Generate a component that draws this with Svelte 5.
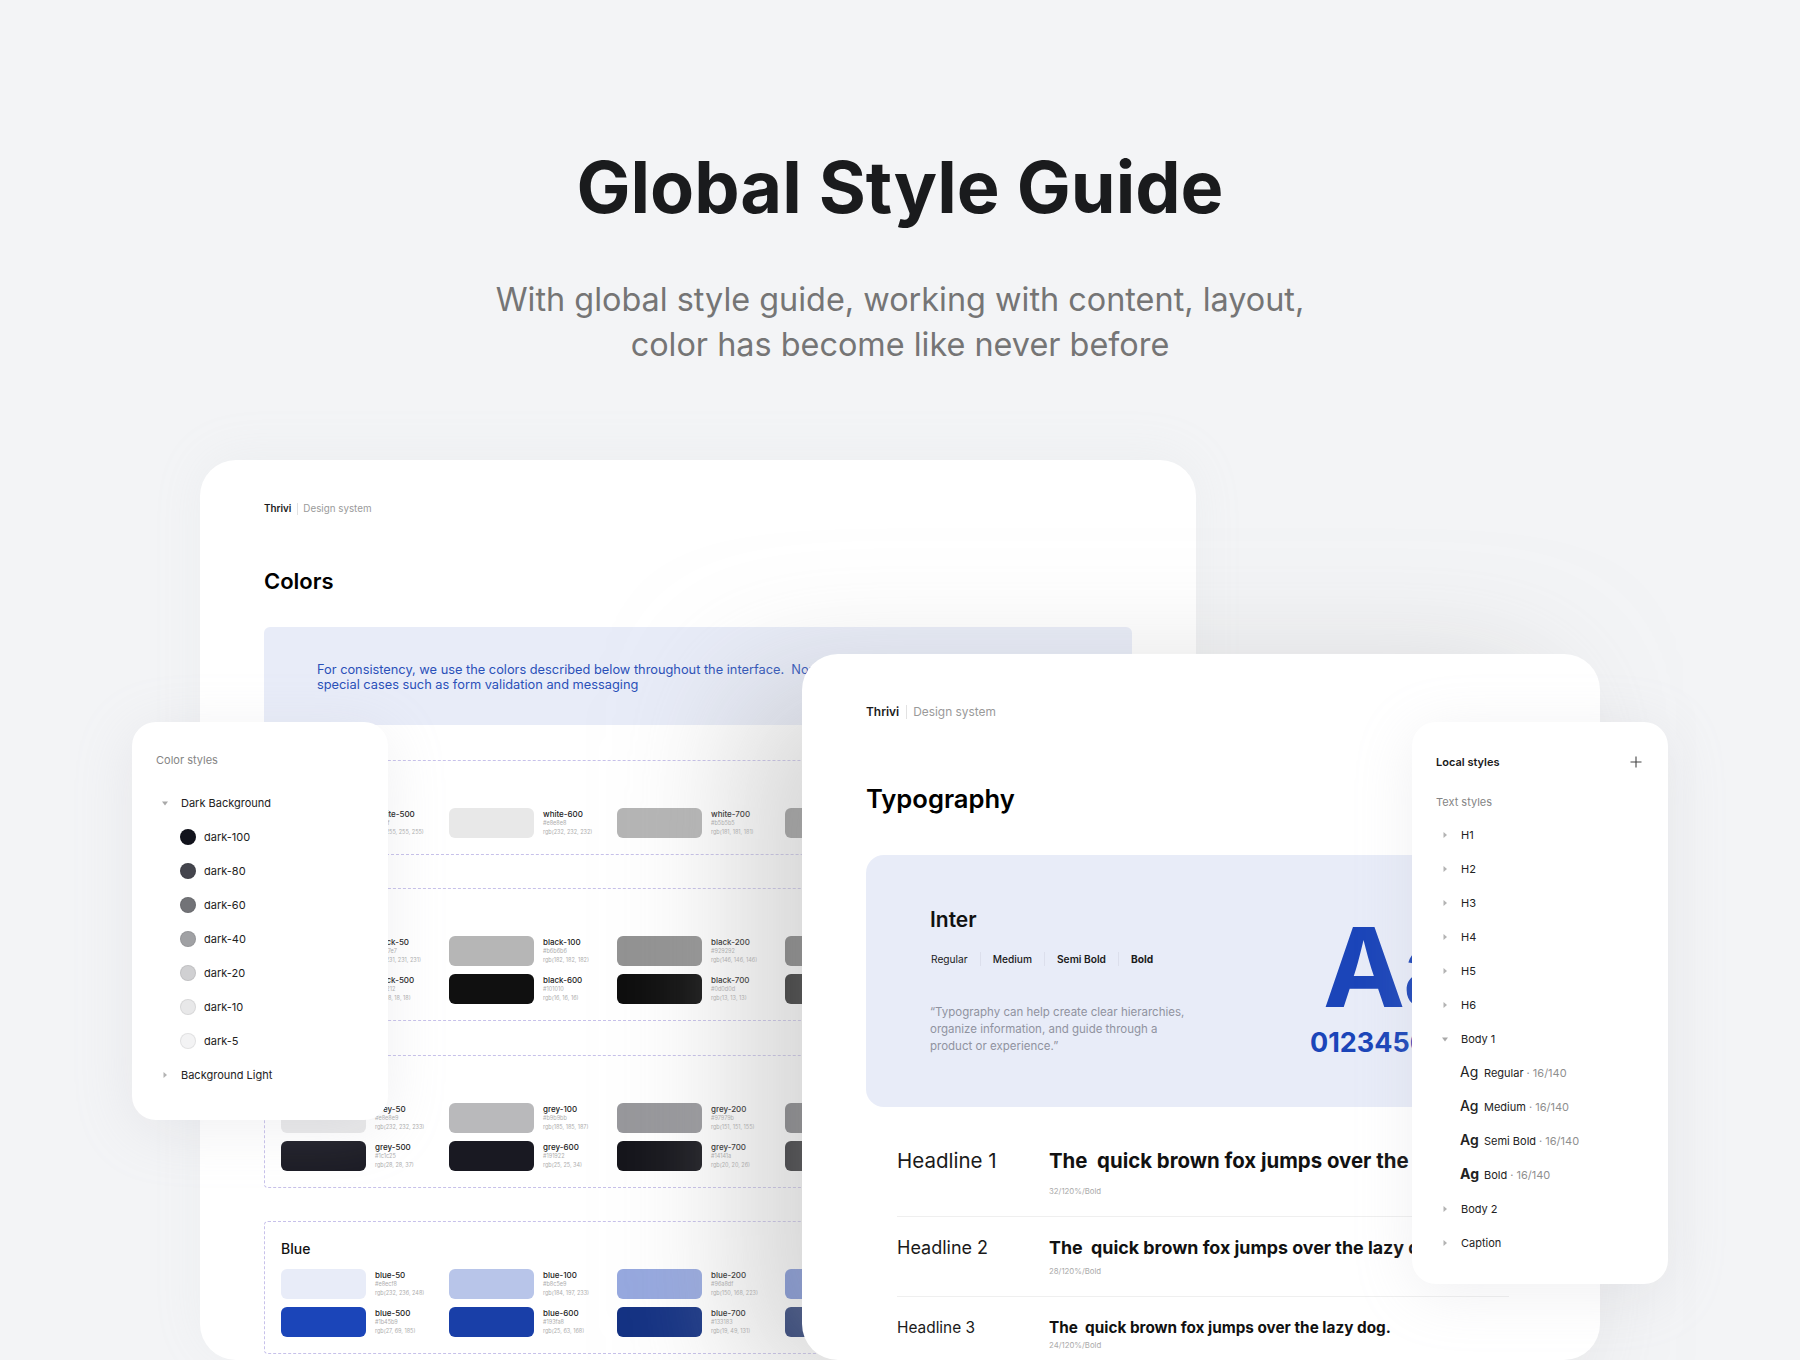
<script>
  const palette = [
    {
      name: 'White',
      rows: [[
        ['white-500', '#ffffff', 'rgb(255, 255, 255)', '#ffffff'],
        ['white-600', '#e8e8e8', 'rgb(232, 232, 232)', '#e8e8e8'],
        ['white-700', '#b5b5b5', 'rgb(181, 181, 181)', '#b5b5b5'],
        ['white-800', '#919191', 'rgb(145, 145, 145)', '#919191']
      ]]
    },
    {
      name: 'Black',
      rows: [[
        ['black-50', '#e7e7e7', 'rgb(231, 231, 231)', '#e7e7e7'],
        ['black-100', '#b6b6b6', 'rgb(182, 182, 182)', '#b6b6b6'],
        ['black-200', '#929292', 'rgb(146, 146, 146)', '#929292'],
        ['black-300', '#6d6d6d', 'rgb(109, 109, 109)', '#6d6d6d']
      ], [
        ['black-500', '#121212', 'rgb(18, 18, 18)', '#121212'],
        ['black-600', '#101010', 'rgb(16, 16, 16)', '#101010'],
        ['black-700', '#0d0d0d', 'rgb(13, 13, 13)', '#0d0d0d'],
        ['black-800', '#0a0a0a', 'rgb(10, 10, 10)', '#0a0a0a']
      ]]
    },
    {
      name: 'Grey',
      rows: [[
        ['grey-50', '#e8e8e9', 'rgb(232, 232, 233)', '#e8e8e9'],
        ['grey-100', '#b9b9bb', 'rgb(185, 185, 187)', '#b9b9bb'],
        ['grey-200', '#97979b', 'rgb(151, 151, 155)', '#97979b'],
        ['grey-300', '#6e6e72', 'rgb(110, 110, 114)', '#6e6e72']
      ], [
        ['grey-500', '#1c1c25', 'rgb(28, 28, 37)', '#1c1c25'],
        ['grey-600', '#191922', 'rgb(25, 25, 34)', '#191922'],
        ['grey-700', '#14141a', 'rgb(20, 20, 26)', '#14141a'],
        ['grey-800', '#101014', 'rgb(16, 16, 20)', '#101014']
      ]]
    },
    {
      name: 'Blue',
      rows: [[
        ['blue-50', '#e8ecf8', 'rgb(232, 236, 248)', '#e8ecf8'],
        ['blue-100', '#b8c5e9', 'rgb(184, 197, 233)', '#b8c5e9'],
        ['blue-200', '#96a8df', 'rgb(150, 168, 223)', '#96a8df'],
        ['blue-300', '#6c85d2', 'rgb(108, 133, 210)', '#6c85d2']
      ], [
        ['blue-500', '#1b45b9', 'rgb(27, 69, 185)', '#1b45b9'],
        ['blue-600', '#193fa8', 'rgb(25, 63, 168)', '#193fa8'],
        ['blue-700', '#133183', 'rgb(19, 49, 131)', '#133183'],
        ['blue-800', '#0f2666', 'rgb(15, 38, 102)', '#0f2666']
      ]]
    }
  ];

  const darks = [
    ['dark-100', '#12131c'],
    ['dark-80', '#44454d'],
    ['dark-60', '#727377'],
    ['dark-40', '#a0a1a4'],
    ['dark-20', '#d0d0d2'],
    ['dark-10', '#e8e8e9'],
    ['dark-5', '#f3f3f4']
  ];

  const ags = [
    ['Regular', 400],
    ['Medium', 500],
    ['Semi Bold', 600],
    ['Bold', 700]
  ];

  const headlines = [
    { label: 'Headline 1', meta: '32/120%/Bold', cls: 'h1', text: 'The  quick brown fox jumps over the lazy dog.' },
    { label: 'Headline 2', meta: '28/120%/Bold', cls: 'h2', text: 'The  quick brown fox jumps over the lazy dog.' },
    { label: 'Headline 3', meta: '24/120%/Bold', cls: 'h3', text: 'The  quick brown fox jumps over the lazy dog.' }
  ];
</script>

{#snippet caret(open)}
  <svg class="caret" width="8" height="8" viewBox="0 0 8 8">
    {#if open}
      <path d="M1 2.5h6L4 6.5z" fill="#a9a9a9" />
    {:else}
      <path d="M2.5 1v6L6 4z" fill="#b4b4b4" />
    {/if}
  </svg>
{/snippet}

<div class="page">
  <header class="hero">
    <h1>Global Style Guide</h1>
    <p>With global style guide, working with content, layout,<br />color has become like never before</p>
  </header>

  <section class="window back">
    <div class="crumb">
      <b>Thrivi</b><i></i><span>Design system</span>
    </div>
    <h2>Colors</h2>
    <div class="banner">
      <div>For consistency, we use the colors described below throughout the interface.  Non-standard colors appear only in</div>
      <div>special cases such as form validation and messaging</div>
    </div>
    <div class="groups">
      {#each palette as group}
        <div class="group">
          <h3>{group.name}</h3>
          {#each group.rows as row}
            <div class="swatches">
              {#each row as [name, hex, rgb, color]}
                <div class="swatch">
                  <div class="chip" style="background: {color}"></div>
                  <div class="info">
                    <strong>{name}</strong>
                    <small>{hex}</small>
                    <small>{rgb}</small>
                  </div>
                </div>
              {/each}
            </div>
          {/each}
        </div>
      {/each}
    </div>
  </section>

  <aside class="panel colors">
    <div class="muted">Color styles</div>
    <ul>
      <li>{@render caret(true)}<span>Dark Background</span></li>
      {#each darks as [name, color]}
        <li class="dot-row"><em style="background: {color}"></em><span>{name}</span></li>
      {/each}
      <li>{@render caret(false)}<span>Background Light</span></li>
    </ul>
  </aside>

  <section class="window front">
    <div class="crumb">
      <b>Thrivi</b><i></i><span>Design system</span>
    </div>
    <h2>Typography</h2>
    <div class="specimen">
      <div class="about">
        <h3>Inter</h3>
        <div class="weights">
          <span class="w400">Regular</span>
          <span class="w500">Medium</span>
          <span class="w600">Semi Bold</span>
          <span class="w700">Bold</span>
        </div>
        <p>“Typography can help create clear hierarchies, organize information, and guide through a product or experience.”</p>
      </div>
      <div class="glyphs">
        <div class="aa">Aa</div>
        <div class="digits">0123456789</div>
      </div>
    </div>
    <div class="samples">
      {#each headlines as line}
        <div class="sample {line.cls}">
          <div class="label">{line.label}</div>
          <div class="copy">
            <div class="text">{line.text}</div>
            <div class="meta">{line.meta}</div>
          </div>
        </div>
      {/each}
    </div>
  </section>

  <aside class="panel local">
    <div class="panel-head">
      <b>Local styles</b>
      <svg width="12" height="12" viewBox="0 0 12 12"><path d="M6 .5v11M.5 6h11" stroke="#444" stroke-width="1.1" fill="none" /></svg>
    </div>
    <div class="muted">Text styles</div>
    <ul>
      {#each ['H1', 'H2', 'H3', 'H4', 'H5', 'H6'] as name}
        <li>{@render caret(false)}<span>{name}</span></li>
      {/each}
      <li>{@render caret(true)}<span>Body 1</span></li>
      {#each ags as [name, weight]}
        <li class="ag-row">
          <em style="font-weight: {weight}">Ag</em>
          <span>{name}</span><u>· 16/140</u>
        </li>
      {/each}
      <li>{@render caret(false)}<span>Body 2</span></li>
      <li>{@render caret(false)}<span>Caption</span></li>
    </ul>
  </aside>
</div>

<style>
  :global(body) {
    margin: 0;
    background: #f3f4f6;
  }

  .page {
    position: relative;
    height: 1360px;
    overflow: hidden;
    font-family: Inter, "Liberation Sans", sans-serif;
    background: #f3f4f6;
    color: #111;
  }

  .hero {
    text-align: center;
    padding-top: 144px;
  }

  .hero h1 {
    margin: 0;
    font-size: 72px;
    line-height: 86px;
    font-weight: 700;
    color: #1a1b1d;
  }

  .hero p {
    margin: 47px 0 0;
    font-size: 32.4px;
    line-height: 45px;
    color: #757575;
  }

  .window {
    position: absolute;
    background: #fff;
    border-radius: 36px;
    overflow: hidden;
  }

  .back {
    left: 200px;
    top: 460px;
    width: 996px;
    height: 900px;
    padding: 42px 64px 0;
    box-sizing: border-box;
    box-shadow: 0 -6px 50px rgba(190, 192, 198, 0.1);
  }

  .front {
    left: 802px;
    top: 654px;
    width: 798px;
    height: 706px;
    padding: 50px 64px 0;
    box-sizing: border-box;
    overflow: hidden;
    box-shadow: -60px 30px 130px rgba(175, 175, 175, 0.52);
  }

  .crumb {
    display: flex;
    align-items: center;
    font-size: 9.8px;
    line-height: 14px;
    color: #9a9a9a;
  }

  .crumb b {
    font-weight: 600;
    color: #1a1a1a;
  }

  .crumb i {
    width: 1px;
    height: 12px;
    background: #e2e2e2;
    margin: 0 5.5px;
  }

  .back h2 {
    margin: 51px 0 32px;
    font-size: 22px;
    line-height: 28px;
    font-weight: 600;
    color: #000;
  }

  .banner {
    width: 868px;
    height: 98px;
    box-sizing: border-box;
    padding: 35px 53px 0;
    border-radius: 6px 6px 0 0;
    background: #e8ecf8;
    color: #2a50b8;
    font-size: 12.8px;
    line-height: 15px;
  }

  .banner div {
    white-space: pre;
  }

  .groups {
    margin-top: 35px;
    width: 868px;
    display: flex;
    flex-direction: column;
    gap: 33.3px;
  }

  .group {
    border: 1px dashed #c7c1ea;
    border-radius: 4px;
    padding: 0 16px 16px;
  }

  .group h3 {
    margin: 0;
    height: 47px;
    padding-top: 18px;
    box-sizing: border-box;
    font-size: 14px;
    line-height: 17px;
    font-weight: 500;
    color: #111;
  }

  .swatches {
    display: grid;
    grid-template-columns: repeat(4, 168px);
  }

  .swatches + .swatches {
    margin-top: 8px;
  }

  .swatch {
    display: flex;
    gap: 9px;
  }

  .chip {
    width: 85px;
    height: 30px;
    border-radius: 6px;
  }

  .info {
    display: flex;
    flex-direction: column;
  }

  .info strong {
    font-size: 8px;
    line-height: 10px;
    margin-top: 1px;
    font-weight: 500;
    color: #222;
  }

  .info small {
    font-size: 5.5px;
    line-height: 9px;
    color: #adadad;
  }

  .panel {
    position: absolute;
    box-sizing: border-box;
    width: 256px;
    background: #fff;
    border-radius: 24px;
    box-shadow: 0 10px 60px rgba(180, 182, 188, 0.2);
    font-size: 11px;
    line-height: 14px;
    color: #222;
  }

  .colors {
    left: 132px;
    top: 722px;
    height: 398px;
    padding: 31px 24px 0;
  }

  .local {
    left: 1412px;
    top: 722px;
    height: 562px;
    padding: 33px 24px 0;
  }

  .muted {
    font-size: 11px;
    color: #858585;
  }

  .panel ul {
    list-style: none;
    margin: 19px 0 0;
    padding: 0;
  }

  .local ul {
    margin-top: 9px;
  }

  .panel li {
    height: 34px;
    display: flex;
    align-items: center;
    white-space: nowrap;
  }

  .caret {
    margin-left: 5px;
    margin-right: 12px;
    flex: none;
  }

  .dot-row em {
    width: 16px;
    height: 16px;
    border-radius: 50%;
    margin: 0 8px 0 24px;
    box-sizing: border-box;
    border: 0.5px solid rgba(0, 0, 0, 0.07);
  }

  .panel-head {
    display: flex;
    align-items: center;
    justify-content: space-between;
    padding-right: 2px;
    margin-bottom: 26px;
  }

  .panel-head b {
    font-weight: 600;
    color: #1a1a1a;
  }

  .ag-row em {
    font-style: normal;
    font-size: 14px;
    width: 24px;
    margin-left: 24px;
    position: relative;
    top: -1px;
    flex: none;
  }

  .ag-row span {
    font-size: 11px;
    margin-right: 3px;
  }

  .ag-row u {
    font-size: 11px;
    text-decoration: none;
    color: #8f8f8f;
  }

  .front h2 {
    margin: 62px 0 39px;
    font-size: 25.6px;
    line-height: 34px;
    font-weight: 600;
    color: #000;
  }

  .front .crumb {
    font-size: 11.9px;
    line-height: 16px;
  }

  .front .crumb i {
    height: 14px;
    margin: 0 6.5px;
  }

  .specimen {
    width: 670px;
    height: 252px;
    box-sizing: border-box;
    padding: 52px 0 0 64px;
    border-radius: 18px;
    background: #e8ecf8;
    display: flex;
    overflow: hidden;
  }

  .about {
    width: 380px;
    flex: none;
  }

  .about h3 {
    margin: 0;
    font-size: 21px;
    line-height: 26px;
    font-weight: 600;
    color: #111;
  }

  .weights {
    display: flex;
    margin-top: 19px;
    font-size: 10.2px;
    line-height: 14px;
    color: #1a1a1a;
  }

  .weights span {
    padding: 0 12px;
    border-left: 1px solid #dcdfec;
  }

  .weights span:first-child {
    padding-left: 1px;
    border-left: 0;
  }

  .w400 { font-weight: 400; }
  .w500 { font-weight: 500; }
  .w600 { font-weight: 600; }
  .w700 { font-weight: 700; }

  .about p {
    margin: 38px 0 0;
    width: 262px;
    font-size: 11.5px;
    line-height: 17px;
    color: #9093a0;
  }

  .glyphs {
    color: #1b45b9;
    font-weight: 700;
    white-space: nowrap;
  }

  .aa {
    margin: 4px 0 0 13px;
    font-size: 110px;
    line-height: 112px;
    letter-spacing: -2px;
  }

  .digits {
    margin-top: 2px;
    font-size: 27px;
    line-height: 36px;
    font-weight: 700;
  }

  .samples {
    margin: 0 0 0 31px;
    width: 612px;
  }

  .sample {
    display: flex;
    border-bottom: 1px solid #efefef;
    white-space: nowrap;
  }

  .sample .label {
    width: 152px;
    flex: none;
    color: #1a1a1a;
  }

  .text {
    font-weight: 700;
    white-space: pre;
    color: #111;
  }

  .meta {
    font-size: 7.8px;
    line-height: 10px;
    color: #aaa;
  }

  .h1 {
    padding: 40px 0 20px;
  }

  .h1 .label {
    font-size: 20.5px;
    line-height: 28px;
  }

  .h1 .text {
    font-size: 20.4px;
    line-height: 28px;
  }

  .h1 .meta {
    margin-top: 11px;
  }

  .h2 {
    padding: 19px 0 20px;
  }

  .h2 .label {
    font-size: 18px;
    line-height: 24px;
  }

  .h2 .text {
    font-size: 17.85px;
    line-height: 24px;
  }

  .h2 .meta {
    margin-top: 6px;
  }

  .h3 {
    padding: 21px 0 21px;
    border-bottom: 0;
  }

  .h3 .label {
    font-size: 15.4px;
    line-height: 20px;
  }

  .h3 .text {
    font-size: 15.3px;
    line-height: 20px;
  }

  .h3 .meta {
    margin-top: 2px;
  }
</style>
